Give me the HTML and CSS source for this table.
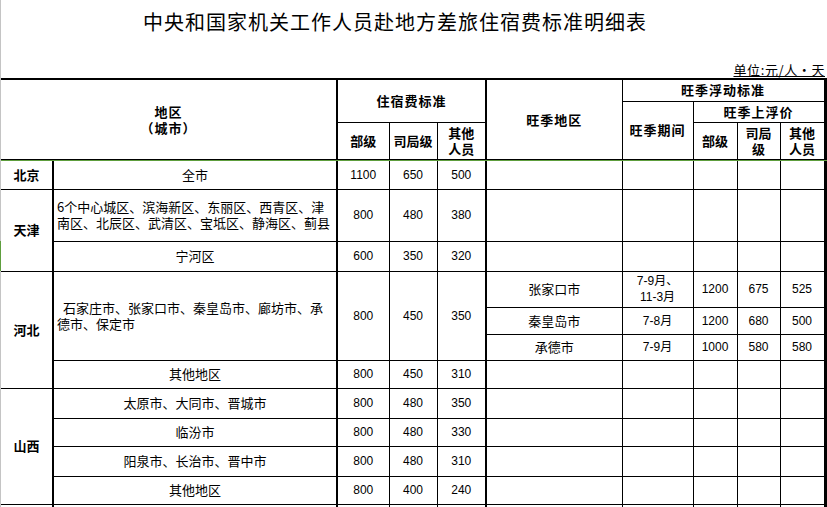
FILE: index.html
```html
<!DOCTYPE html>
<html lang="zh-CN">
<head>
<meta charset="utf-8">
<title>中央和国家机关工作人员赴地方差旅住宿费标准明细表</title>
<link rel="stylesheet" href="styles.css">
</head>
<body>
<div class="sheet">
  <h1 class="title">中央和国家机关工作人员赴地方差旅住宿费标准明细表</h1>
  <div class="unit"><span>单位:元/人·天</span></div>
  <table class="grid">
    <colgroup>
      <col class="c-prov">
      <col class="c-city">
      <col class="c-n1">
      <col class="c-n2">
      <col class="c-n3">
      <col class="c-peak">
      <col class="c-period">
      <col class="c-p1">
      <col class="c-p2">
      <col class="c-p3">
    </colgroup>
    <thead>
      <tr class="h1">
        <th colspan="2" rowspan="3">地区<br>（城市）</th>
        <th colspan="3" rowspan="2">住宿费标准</th>
        <th rowspan="3">旺季地区</th>
        <th colspan="4">旺季浮动标准</th>
      </tr>
      <tr class="h2">
        <th rowspan="2">旺季期间</th>
        <th colspan="3">旺季上浮价</th>
      </tr>
      <tr class="h3">
        <th class="tight">部级</th>
        <th class="tight">司局级</th>
        <th class="tight">其他<br>人员</th>
        <th class="tight">部级</th>
        <th class="tight">司局<br>级</th>
        <th class="tight">其他<br>人员</th>
      </tr>
    </thead>
    <tbody>
      <tr class="r29">
        <td class="prov">北京</td>
        <td class="city">全市</td>
        <td class="n">1100</td><td class="n">650</td><td class="n">500</td>
        <td></td><td></td><td></td><td></td><td></td>
      </tr>
      <tr class="r52">
        <td class="prov" rowspan="2">天津</td>
        <td class="city left">6个中心城区、滨海新区、东丽区、西青区、津南区、北辰区、武清区、宝坻区、静海区、蓟县</td>
        <td class="n">800</td><td class="n">480</td><td class="n">380</td>
        <td></td><td></td><td></td><td></td><td></td>
      </tr>
      <tr class="r30">
        <td class="city">宁河区</td>
        <td class="n">600</td><td class="n">350</td><td class="n">320</td>
        <td></td><td></td><td></td><td></td><td></td>
      </tr>
      <tr class="r36">
        <td class="prov" rowspan="4">河北</td>
        <td class="city left indent" rowspan="3">石家庄市、张家口市、秦皇岛市、廊坊市、承德市、保定市</td>
        <td class="n" rowspan="3">800</td><td class="n" rowspan="3">450</td><td class="n" rowspan="3">350</td>
        <td class="city">张家口市</td>
        <td class="period">7-9月、<br>11-3月</td>
        <td class="n">1200</td><td class="n">675</td><td class="n">525</td>
      </tr>
      <tr class="r27">
        <td class="city">秦皇岛市</td>
        <td class="period">7-8月</td>
        <td class="n">1200</td><td class="n">680</td><td class="n">500</td>
      </tr>
      <tr class="r26">
        <td class="city">承德市</td>
        <td class="period">7-9月</td>
        <td class="n">1000</td><td class="n">580</td><td class="n">580</td>
      </tr>
      <tr class="r28">
        <td class="city">其他地区</td>
        <td class="n">800</td><td class="n">450</td><td class="n">310</td>
        <td></td><td></td><td></td><td></td><td></td>
      </tr>
      <tr class="r30">
        <td class="prov" rowspan="4">山西</td>
        <td class="city">太原市、大同市、晋城市</td>
        <td class="n">800</td><td class="n">480</td><td class="n">350</td>
        <td></td><td></td><td></td><td></td><td></td>
      </tr>
      <tr class="r28">
        <td class="city">临汾市</td>
        <td class="n">800</td><td class="n">480</td><td class="n">330</td>
        <td></td><td></td><td></td><td></td><td></td>
      </tr>
      <tr class="r30">
        <td class="city">阳泉市、长治市、晋中市</td>
        <td class="n">800</td><td class="n">480</td><td class="n">310</td>
        <td></td><td></td><td></td><td></td><td></td>
      </tr>
      <tr class="r28">
        <td class="city">其他地区</td>
        <td class="n">800</td><td class="n">400</td><td class="n">240</td>
        <td></td><td></td><td></td><td></td><td></td>
      </tr>
      <tr class="r30">
        <td></td><td></td><td></td><td></td><td></td>
        <td></td><td></td><td></td><td></td><td></td>
      </tr>
    </tbody>
  </table>
  <div class="freeze-line"></div>
  <div class="sel-mark"></div>
</div>
</body>
</html>
```

FILE: styles.css
```css
html, body {
  margin: 0;
  padding: 0;
  overflow: hidden;
  background: #fff;
}

body {
  font-family: "Noto Sans CJK SC", "Noto Sans", sans-serif;
  color: #000;
}

.sheet {
  position: relative;
  height: 507px;
  padding-left: 1px;
  box-shadow: inset 1px 0 0 #c4c4c4;
  overflow: hidden;
}

.title {
  margin: 0;
  padding: 8px 0 0 142px;
  font-size: 20px;
  font-weight: 400;
  letter-spacing: 1px;
  line-height: 28px;
  white-space: nowrap;
}

.unit {
  margin-top: 26px;
  padding-right: 2px;
  text-align: right;
  font-size: 13px;
  line-height: 16px;
  letter-spacing: 0.6px;
}

.unit span {
  text-decoration: underline;
  text-underline-offset: 1px;
}

.grid {
  border-collapse: collapse;
  table-layout: fixed;
  width: 824px;
  border-top: 2px solid #000;
  border-right: 3px solid #000;
  border-left: hidden;
  font-size: 13px;
  line-height: 16px;
}

.grid th,
.grid td {
  border: 1px solid #000;
  padding: 0 3px;
  text-align: center;
  vertical-align: middle;
  overflow: hidden;
}

.grid th {
  font-weight: 700;
  letter-spacing: 1px;
}

.grid th.tight {
  padding: 0 1px;
  letter-spacing: 0;
}

.grid thead {
  border-bottom: 2px solid #000;
}

.c-prov { width: 52px; border-right: 2px solid #000; }
.c-city { width: 284px; border-right: 2px solid #000; }
.c-n1 { width: 52px; }
.c-n2 { width: 48px; }
.c-n3 { width: 49px; border-right: 2px solid #000; }
.c-peak { width: 136px; }
.c-period { width: 71px; }
.c-p1 { width: 44px; }
.c-p2 { width: 43px; }
.c-p3 { width: 45px; }

.h1 { height: 22px; }
.h2 { height: 21px; }
.h3 { height: 38px; }

.r26 { height: 26px; }
.r27 { height: 27px; }
.r28 { height: 28px; }
.r29 { height: 29px; }
.r30 { height: 30px; }
.r36 { height: 36px; }
.r52 { height: 52px; }

.grid td.prov {
  font-weight: 700;
  padding: 0;
  white-space: nowrap;
}

.grid td.city.left {
  text-align: left;
}

.grid td.indent {
  text-indent: 6px;
}

.grid td.n {
  font-family: "Liberation Sans", "Noto Sans CJK SC", sans-serif;
  font-size: 12px;
}

.grid td.period {
  font-family: "Liberation Sans", "Noto Sans CJK SC", sans-serif;
  font-size: 12px;
  padding: 0 1px;
}

.freeze-line {
  position: absolute;
  left: 1px;
  right: 0;
  top: 160px;
  height: 1px;
  background: #5e9e3e;
}

.sel-mark {
  position: absolute;
  left: 0;
  top: 241px;
  width: 1px;
  height: 30px;
  background: #5e9e3e;
}
```
